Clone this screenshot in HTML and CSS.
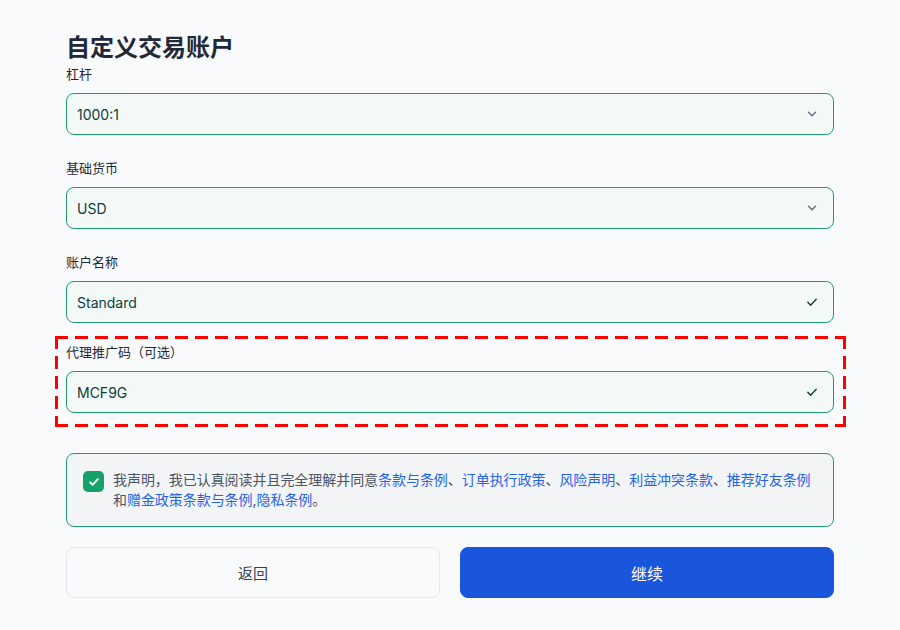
FILE: index.html
```html
<!DOCTYPE html>
<html lang="zh-CN">
<head>
<meta charset="utf-8">
<link rel="stylesheet" href="styles.css">
</head>
<body>
<div class="page">
  <h1 class="title">自定义交易账户</h1>
  <div class="field">
    <div class="label">杠杆</div>
    <div class="box"><span>1000:1</span>
      <svg class="ico" width="14" height="14" viewBox="0 0 20 20"><path d="M5 7.5l5 5 5-5" fill="none" stroke="#6b7280" stroke-width="2.2" stroke-linecap="round" stroke-linejoin="round"/></svg>
    </div>
  </div>
  <div class="field">
    <div class="label">基础货币</div>
    <div class="box"><span>USD</span>
      <svg class="ico" width="14" height="14" viewBox="0 0 20 20"><path d="M5 7.5l5 5 5-5" fill="none" stroke="#6b7280" stroke-width="2.2" stroke-linecap="round" stroke-linejoin="round"/></svg>
    </div>
  </div>
  <div class="field">
    <div class="label">账户名称</div>
    <div class="box"><span>Standard</span>
      <svg class="ico" width="14" height="14" viewBox="0 0 20 20"><path d="M4 10.5l4 4 8-8.5" fill="none" stroke="#0f3d3a" stroke-width="2" stroke-linecap="round" stroke-linejoin="round"/></svg>
    </div>
  </div>
  <div class="highlight">
    <div class="field tight">
      <div class="label">代理推广码（可选）</div>
      <div class="box"><span>MCF9G</span>
        <svg class="ico" width="14" height="14" viewBox="0 0 20 20"><path d="M4 10.5l4 4 8-8.5" fill="none" stroke="#0f3d3a" stroke-width="2" stroke-linecap="round" stroke-linejoin="round"/></svg>
      </div>
    </div>
  </div>
  <div class="agree">
    <div class="check"><svg width="14" height="14" viewBox="0 0 20 20"><path d="M4.5 10.5l3.5 3.5 7.5-8" fill="none" stroke="#fff" stroke-width="2.8" stroke-linecap="round" stroke-linejoin="round"/></svg></div>
    <p class="agree-text">我声明，我已认真阅读并且完全理解并同意<a>条款与条例</a>、<a>订单执行政策</a>、<a>风险声明</a>、<a>利益冲突条款</a>、<a>推荐好友条例</a>和<a>赠金政策条款与条例</a>,<a>隐私条例</a>。</p>
  </div>
  <div class="actions">
    <button class="btn back">返回</button>
    <button class="btn next">继续</button>
  </div>
</div>
</body>
</html>
```
FILE: styles.css
```css
html, body {
  margin: 0;
  padding: 0;
  background: #f9fafb;
}
body {
  font-family: Inter, "Noto Sans CJK SC", sans-serif;
  color: #111827;
}
.page {
  width: 768px;
  margin: 0 auto;
  padding-top: 34px;
}
.title {
  margin: 0;
  font-size: 24px;
  line-height: 28px;
  font-weight: 700;
  color: #1f2937;
  height: 30px;
}
.field {
  margin-bottom: 23px;
}
.field.tight {
  margin-bottom: 0;
}
.label {
  font-size: 13px;
  line-height: 20px;
  color: #1f2937;
  margin-bottom: 9px;
}
.box {
  height: 40px;
  box-sizing: content-box;
  border: 1px solid #1f9d6e;
  border-radius: 8px;
  background: #f3f9f6;
  display: flex;
  align-items: center;
  justify-content: space-between;
  padding: 0 14px 0 10px;
  font-size: 14px;
  color: #0f3d3a;
}
.ico {
  display: block;
}
.highlight {
  margin: -10px -12px 0 -11px;
  padding: 6px 12px 14px 11px;
  background:
    repeating-linear-gradient(90deg, #ff0000 0 13px, transparent 13px 20px) left top / 100% 3px no-repeat,
    repeating-linear-gradient(90deg, #ff0000 0 13px, transparent 13px 20px) left bottom / 100% 3px no-repeat,
    repeating-linear-gradient(180deg, #ff0000 0 13px, transparent 13px 20px) left top / 3px 100% no-repeat,
    repeating-linear-gradient(180deg, #ff0000 0 13px, transparent 13px 20px) right top / 3px 100% no-repeat;
}
.agree {
  margin-top: 26px;
  border: 1px solid #1f9d6e;
  border-radius: 8px;
  background: #f3f4f6;
  padding: 16px 16px 16px 16px;
  display: flex;
  align-items: flex-start;
  gap: 9px;
  height: 40px;
}
.check {
  width: 21px;
  height: 21px;
  flex: none;
  border-radius: 5px;
  background: #16a06c;
  display: flex;
  align-items: center;
  justify-content: center;
  margin-top: 1px;
}
.agree-text {
  margin: 0;
  font-size: 14px;
  line-height: 20px;
  color: #4b5563;
  letter-spacing: -0.05px;
}
.agree-text a {
  color: #2563eb;
}
.actions {
  margin-top: 20px;
  display: flex;
  gap: 20px;
}
.btn {
  flex: 1;
  height: 51px;
  border-radius: 8px;
  font-family: Inter, "Noto Sans CJK SC", sans-serif;
  font-size: 15px;
  cursor: pointer;
}
.back {
  background: #f9fafb;
  border: 1px solid #e5e7eb;
  color: #374151;
}
.next {
  background: #1a56db;
  border: 1px solid #1a56db;
  color: #ffffff;
  font-size: 16px;
}
```
